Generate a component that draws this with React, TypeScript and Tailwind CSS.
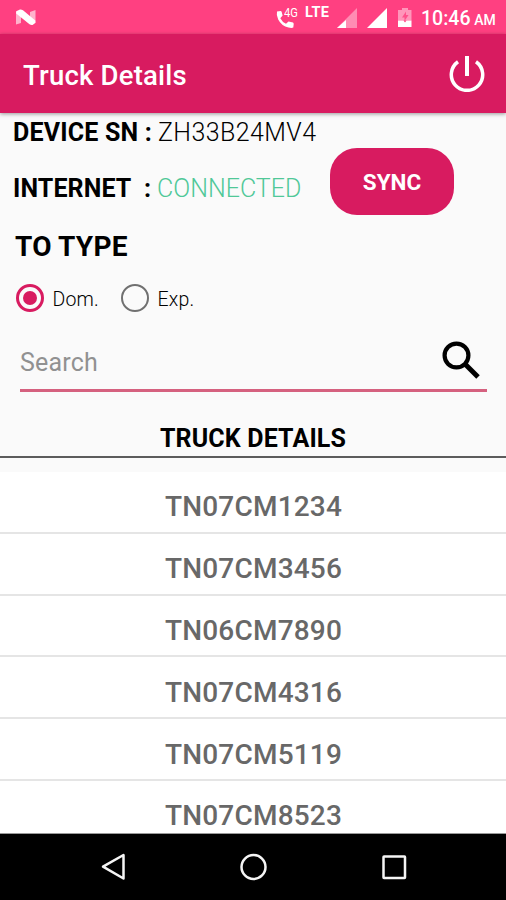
const trucks = ['TN07CM1234', 'TN07CM3456', 'TN06CM7890', 'TN07CM4316', 'TN07CM5119', 'TN07CM8523'];

function StatusBar() {
  return (
    <div className="flex h-[34px] shrink-0 items-start bg-[#ff4081] text-white">
      <svg className="mt-[9px] ml-[15px] h-[17px] w-[22px]" viewBox="0 0 22 17">
        <path d="M1 2.500 6 5.500V14L1 15.500ZM15 3 20.500 1V14L15 12Z" fill="#fff" opacity=".6" />
        <path d="M1.200 2.300 5 .5Q6.500 .3 8 1.300L20.300 11.500V14L17.500 16Q16 16.300 14.500 15.300L1.200 4.500Z" fill="#fff" />
      </svg>
      <div className="ml-[239px] flex">
        <svg className="mt-[9px] h-5 w-[18px]" viewBox="0 0 18 20">
          <path d="M1 2.500 4.600 2Q5.400 2 5.700 3L6.600 6.500 4.300 9.200Q6.200 13 10 14.700L12.500 12.400 17 13.500Q17.800 14 17.700 15L17.300 18.500Q16 19.300 12.500 18.600 5.500 17 2.200 10.500 .1 6 1 2.500Z" fill="#fff" />
        </svg>
        <span className="mt-[6px] -ml-[10px] block w-[15px] origin-left scale-x-[0.86] text-[13px] leading-[14px]">4G</span>
        <span className="mt-[5px] ml-[6px] block w-[28px] text-[14.500px] leading-[16px] font-bold tracking-[0.3px]">LTE</span>
      </div>
      <svg className="mt-[8px] ml-[4px] h-5 w-[84px]" viewBox="0 0 84 20">
        <path d="M20 0V20H0Z" fill="#fff" opacity=".4" />
        <path d="M9 12V20H0Z" fill="#fff" />
        <path d="M50 0V20H30Z" fill="#fff" />
        <path d="M65 0h6v2h3.500v10.500H61V2h4Z" fill="#fff" opacity=".45" />
        <path d="M69 3.500 65 9.500h2.500V13L71.500 7H69Z" fill="#ff4081" opacity=".8" />
        <path d="M61 12.500h5.500l1.500 2 1.500-2h5V19H61Z" fill="#fff" />
      </svg>
      <span className="mt-[7px] text-[19.500px] leading-[24px] font-medium whitespace-nowrap">
        10:46 <span className="-ml-[1px] text-[14px]">AM</span>
      </span>
    </div>
  );
}

function AppBar() {
  return (
    <header className="z-10 flex h-[79px] shrink-0 items-center justify-between bg-[#d81b60] pr-[20px] pl-[23px] text-white shadow-[0_1px_4px_rgba(0,0,0,0.4)]">
      <h1 className="pt-[4px] text-[27.500px] leading-8 font-medium tracking-[0.2px]">Truck Details</h1>
      <svg className="-mt-[2px] h-[38px] w-[38px]" viewBox="0 0 38 38" fill="none" stroke="#fff">
        <path d="M10 7.800A15.700 15.700 0 1 0 28 7.800" strokeWidth="3.500" />
        <path d="M19 2V22" strokeWidth="4" />
      </svg>
    </header>
  );
}

function Radio({ label, checked }: { label: string; checked?: boolean }) {
  return (
    <label className="flex items-center">
      <span className={`flex h-7 w-7 items-center justify-center rounded-full ${checked ? 'border-[3px] border-[#d81b60]' : 'border-2 border-[#707070]'}`}>
        {checked && <span className="h-[14px] w-[14px] rounded-full bg-[#d81b60]" />}
      </span>
      <span className="ml-[8.500px] pt-[3px] text-[19.500px] leading-6 font-light tracking-[0.2px]">{label}</span>
    </label>
  );
}

export default function App() {
  return (
    <div className="flex h-[900px] w-[506px] flex-col overflow-hidden bg-[#fafafa] font-['Roboto',sans-serif] text-black">
      <StatusBar />
      <AppBar />
      <section className="flex h-[106px] shrink-0 pl-[13px]">
        <div className="w-[317px] whitespace-nowrap">
          <div className="mt-[5px] flex text-[25px] leading-[30px]">
            <span className="w-[145px] font-bold tracking-[0.2px]">DEVICE SN :</span>
            <span className="font-light tracking-[0.4px]">ZH33B24MV4</span>
          </div>
          <div className="mt-[26px] flex text-[25px] leading-[30px]">
            <span className="w-[131px] font-bold tracking-[0.1px]">INTERNET</span>
            <span className="w-[13px] font-bold">:</span>
            <span className="font-light text-[#50c898]">CONNECTED</span>
          </div>
        </div>
        <button className="mt-[35px] h-[67px] w-[124px] rounded-[27px] bg-[#d81b60] pt-[2px] text-[22.500px] font-bold text-white">SYNC</button>
      </section>
      <h2 className="mt-[12px] ml-[15px] text-[28px] leading-8 font-bold tracking-[0.2px]">TO TYPE</h2>
      <div className="mt-[21px] ml-4 flex h-7">
        <div className="w-[105px]"><Radio label="Dom." checked /></div>
        <Radio label="Exp." />
      </div>
      <div className="mt-[20px] mr-[19px] ml-[20px] flex h-[60px] shrink-0 items-center justify-between border-b-[3px] border-[#d5617f]">
        <span className="pt-[4px] text-[25px] leading-8 tracking-[0.2px] text-[#919191]">Search</span>
        <svg className="-mt-[2px] mr-[7px] h-[38px] w-[38px]" viewBox="0 0 38 38" fill="none" stroke="#000">
          <circle cx="14.500" cy="14.500" r="11.900" strokeWidth="4.200" />
          <path d="M23.500 23.500 36 36" strokeWidth="5" />
        </svg>
      </div>
      <h2 className="flex h-[66px] shrink-0 items-end justify-center border-b-2 border-[#5c5c5c] pb-[2px] text-[25px] leading-[30px] font-bold tracking-[0.15px]">TRUCK DETAILS</h2>
      <ul className="mt-[14px] h-[362px] shrink-0 overflow-hidden border-b border-[#999] bg-white">
        {trucks.map((truck) => (
          <li key={truck} className="flex h-[61.800px] items-center justify-center border-b-2 border-[#e5e5e5] pt-[11px] pl-[1px] text-[28px] font-medium tracking-[0.2px] text-[#686868]">
            {truck}
          </li>
        ))}
      </ul>
      <nav className="flex grow items-center justify-around bg-black">
        <svg className="h-[34px] w-[506px]" viewBox="0 0 506 34" fill="none" stroke="#f5f5f5" strokeWidth="2.500">
          <path d="M123.500 5V28.500L103 16.700Z" strokeLinejoin="round" />
          <circle cx="253.500" cy="17" r="12" />
          <rect x="383.500" y="6.500" width="21.500" height="21.500" rx=".5" />
        </svg>
      </nav>
    </div>
  );
}
